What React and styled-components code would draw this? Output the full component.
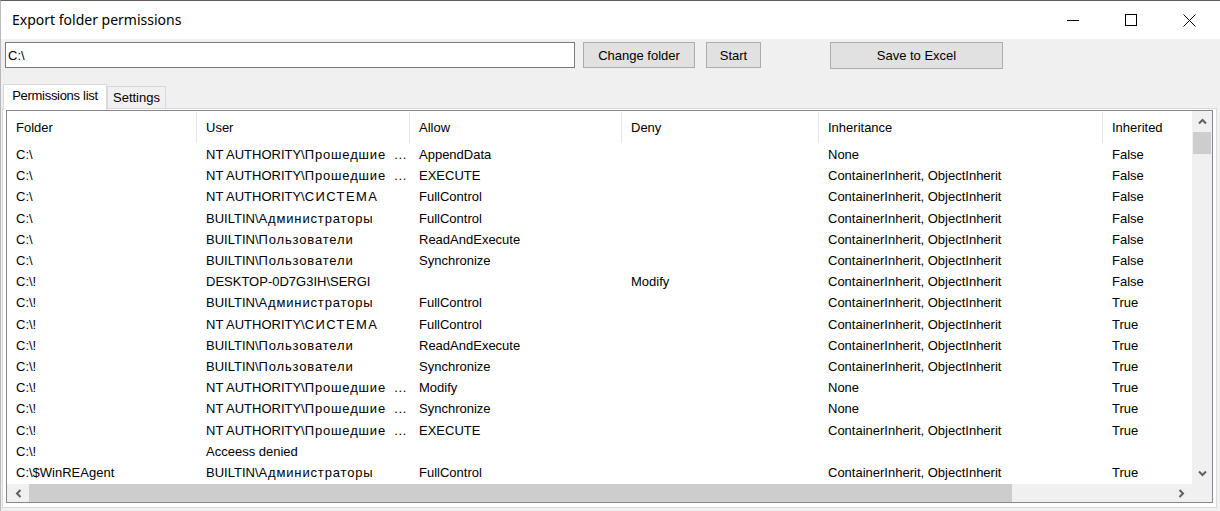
import styled, { createGlobalStyle } from "styled-components";

const GlobalStyle = createGlobalStyle`
  html, body {
    margin: 0;
    padding: 0;
    background: #f0f0f0;
  }
  * {
    box-sizing: border-box;
  }
`;

const COLUMNS = [
  { title: "Folder", width: 190 },
  { title: "User", width: 213 },
  { title: "Allow", width: 212 },
  { title: "Deny", width: 197 },
  { title: "Inheritance", width: 284 },
  { title: "Inherited", width: 260 },
];

const CI = "ContainerInherit, ObjectInherit";
const NTP = "NT AUTHORITY\\Прошедшие ...";

const ROWS = [
  ["C:\\", NTP, "AppendData", "", "None", "False"],
  ["C:\\", NTP, "EXECUTE", "", CI, "False"],
  ["C:\\", "NT AUTHORITY\\СИСТЕМА", "FullControl", "", CI, "False"],
  ["C:\\", "BUILTIN\\Администраторы", "FullControl", "", CI, "False"],
  ["C:\\", "BUILTIN\\Пользователи", "ReadAndExecute", "", CI, "False"],
  ["C:\\", "BUILTIN\\Пользователи", "Synchronize", "", CI, "False"],
  ["C:\\!", "DESKTOP-0D7G3IH\\SERGI", "", "Modify", CI, "False"],
  ["C:\\!", "BUILTIN\\Администраторы", "FullControl", "", CI, "True"],
  ["C:\\!", "NT AUTHORITY\\СИСТЕМА", "FullControl", "", CI, "True"],
  ["C:\\!", "BUILTIN\\Пользователи", "ReadAndExecute", "", CI, "True"],
  ["C:\\!", "BUILTIN\\Пользователи", "Synchronize", "", CI, "True"],
  ["C:\\!", NTP, "Modify", "", "None", "True"],
  ["C:\\!", NTP, "Synchronize", "", "None", "True"],
  ["C:\\!", NTP, "EXECUTE", "", CI, "True"],
  ["C:\\!", "Acceess denied", "", "", "", ""],
  ["C:\\$WinREAgent", "BUILTIN\\Администраторы", "FullControl", "", CI, "True"],
];

const Window = styled.div`
  width: 1220px;
  height: 511px;
  display: flex;
  flex-direction: column;
  border-top: 1px solid #5f5f5f;
  border-left: 1px solid #b9b9b9;
  font-family: "Liberation Sans", Arial, sans-serif;
  font-size: 13px;
  color: #000;
  overflow: hidden;
`;

const TitleBar = styled.div`
  height: 38px;
  flex: none;
  background: #fff;
  display: flex;
  align-items: center;
  justify-content: space-between;
`;

const Title = styled.span`
  font-family: "Noto Sans", "Liberation Sans", sans-serif;
  font-size: 14px;
  padding-left: 11px;
  padding-bottom: 1px;
`;

const Controls = styled.div`
  display: flex;
  height: 100%;
  padding-right: 2px;
`;

const ControlButton = styled.div`
  width: 58px;
  height: 100%;
  display: flex;
  align-items: center;
  justify-content: center;
`;

const Body = styled.div`
  flex: 1;
  display: flex;
  flex-direction: column;
  padding: 3px 3px 3px 1px;
  min-height: 0;
`;

const Toolbar = styled.div`
  display: flex;
  align-items: center;
  height: 26px;
  padding-left: 3px;
`;

const PathInput = styled.div`
  width: 570px;
  height: 26px;
  background: #fff;
  border: 1px solid #7a7a7a;
  padding-left: 2px;
  display: flex;
  align-items: center;
`;

const Button = styled.div`
  width: ${(p) => p.$width}px;
  height: ${(p) => p.$height || 26}px;
  margin-left: ${(p) => p.$gap}px;
  background: #e1e1e1;
  border: 1px solid #adadad;
  display: flex;
  align-items: center;
  justify-content: center;
`;

const TabStrip = styled.div`
  display: flex;
  align-items: flex-end;
  margin-top: 15px;
  height: 26px;
  padding-left: 1px;
  position: relative;
  z-index: 1;
`;

const Tab = styled.div`
  width: ${(p) => p.$width}px;
  height: ${(p) => (p.$active ? 26 : 23)}px;
  padding-top: 3px;
  background: ${(p) => (p.$active ? "#fff" : "#f0f0f0")};
  border: 1px solid #d9d9d9;
  border-bottom: ${(p) => (p.$active ? "none" : "1px solid #d9d9d9")};
  margin-bottom: ${(p) => (p.$active ? -1 : 0)}px;
  display: flex;
  justify-content: center;
  white-space: nowrap;
  letter-spacing: ${(p) => (p.$active ? "-0.3px" : "0")};
`;

const TabPanel = styled.div`
  flex: 1;
  min-height: 0;
  margin-top: -1px;
  background: #fff;
  border: 1px solid #d9d9d9;
  padding: 1px 3px 4px 3px;
  display: flex;
`;

const ListView = styled.div`
  flex: 1;
  border: 1px solid #828790;
  display: grid;
  grid-template-columns: 1fr 20px;
  grid-template-rows: 1fr 18px;
  min-height: 0;
  overflow: hidden;
`;

const Content = styled.div`
  overflow: hidden;
  background: #fff;
`;

const HeaderRow = styled.div`
  display: flex;
  height: 33px;
  padding-top: 1px;
  padding-bottom: 1px;
`;

const HeaderCell = styled.div`
  flex: none;
  width: ${(p) => p.$width}px;
  padding-left: 9px;
  display: flex;
  align-items: center;
  border-right: 1px solid #e5e5e5;
  white-space: nowrap;
`;

const Row = styled.div`
  display: flex;
  height: 21.2px;
`;

const Cell = styled.div`
  flex: none;
  width: ${(p) => p.$width}px;
  padding-left: 9px;
  display: flex;
  align-items: center;
  white-space: pre;
  overflow: hidden;
`;

const Wide = styled.span`
  letter-spacing: ${(p) => p.$spacing}px;
  word-spacing: ${(p) => p.$wordSpacing || 0}px;
`;

const VScroll = styled.div`
  background: #f0f0f0;
  display: flex;
  flex-direction: column;
  align-items: stretch;
`;

const HScroll = styled.div`
  background: #f0f0f0;
  display: flex;
  align-items: stretch;
`;

const Arrow = styled.div`
  flex: none;
  width: ${(p) => (p.$horizontal ? "22px" : "auto")};
  height: ${(p) => (p.$horizontal ? "auto" : "21px")};
  display: flex;
  align-items: center;
  justify-content: center;
`;

const Thumb = styled.div`
  background: #cdcdcd;
  flex: none;
  margin: ${(p) => p.$margin};
  width: ${(p) => p.$w};
  height: ${(p) => p.$h};
`;

const Spacer = styled.div`
  flex: 1;
`;

const Corner = styled.div`
  background: #f0f0f0;
`;

// Cyrillic glyphs and the " ..." render wider in the original font
function CellText({ text }) {
  const parts = text.split(/([А-Яа-яЁё]+| \.\.\.)/);
  return parts.map((part, i) => {
    if (i % 2 === 0) return part;
    if (part === " ...") {
      return (
        <Wide key={i} $spacing={0.6} $wordSpacing={4}>
          {part}
        </Wide>
      );
    }
    const upper = part === part.toUpperCase();
    return (
      <Wide key={i} $spacing={upper ? 1.4 : 0.85}>
        {part}
      </Wide>
    );
  });
}

function Chevron({ dir }) {
  const rot = { up: 0, down: 180, left: 270, right: 90 }[dir];
  return (
    <svg width="9" height="9" viewBox="0 0 9 9" style={{ transform: `rotate(${rot}deg)` }}>
      <polyline
        points="1,6.5 4.5,3 8,6.5"
        fill="none"
        stroke="#606060"
        strokeWidth="2"
      />
    </svg>
  );
}

export default function App() {
  return (
    <>
      <GlobalStyle />
      <Window>
        <TitleBar>
          <Title>Export folder permissions</Title>
          <Controls>
            <ControlButton>
              <svg width="12" height="12" viewBox="0 0 12 12">
                <line x1="0" y1="6.5" x2="12" y2="6.5" stroke="#000" strokeWidth="1" />
              </svg>
            </ControlButton>
            <ControlButton>
              <svg width="12" height="12" viewBox="0 0 12 12">
                <rect x="0.5" y="0.5" width="11" height="11" fill="none" stroke="#000" strokeWidth="1" />
              </svg>
            </ControlButton>
            <ControlButton>
              <svg width="13" height="13" viewBox="0 0 13 13">
                <path d="M0.5 0.5 L12.5 12.5 M12.5 0.5 L0.5 12.5" stroke="#000" strokeWidth="1" />
              </svg>
            </ControlButton>
          </Controls>
        </TitleBar>
        <Body>
          <Toolbar>
            <PathInput>C:\</PathInput>
            <Button $width={112} $gap={8}>Change folder</Button>
            <Button $width={55} $gap={11}>Start</Button>
            <Button $width={173} $gap={69} $height={27}>Save to Excel</Button>
          </Toolbar>
          <TabStrip>
            <Tab $active $width={104}>Permissions list</Tab>
            <Tab $width={59}>Settings</Tab>
          </TabStrip>
          <TabPanel>
            <ListView>
              <Content>
                <HeaderRow>
                  {COLUMNS.map((c) => (
                    <HeaderCell key={c.title} $width={c.width}>
                      {c.title}
                    </HeaderCell>
                  ))}
                </HeaderRow>
                {ROWS.map((r, i) => (
                  <Row key={i}>
                    {r.map((v, j) => (
                      <Cell key={j} $width={COLUMNS[j].width}>
                        <CellText text={v} />
                      </Cell>
                    ))}
                  </Row>
                ))}
              </Content>
              <VScroll>
                <Arrow>
                  <Chevron dir="up" />
                </Arrow>
                <Thumb $margin="0 1px" $w="auto" $h="22px" />
                <Spacer />
                <Arrow>
                  <Chevron dir="down" />
                </Arrow>
              </VScroll>
              <HScroll>
                <Arrow $horizontal>
                  <Chevron dir="left" />
                </Arrow>
                <Thumb $margin="0" $w="983px" $h="auto" />
                <Spacer />
                <Arrow $horizontal>
                  <Chevron dir="right" />
                </Arrow>
              </HScroll>
              <Corner />
            </ListView>
          </TabPanel>
        </Body>
      </Window>
    </>
  );
}
